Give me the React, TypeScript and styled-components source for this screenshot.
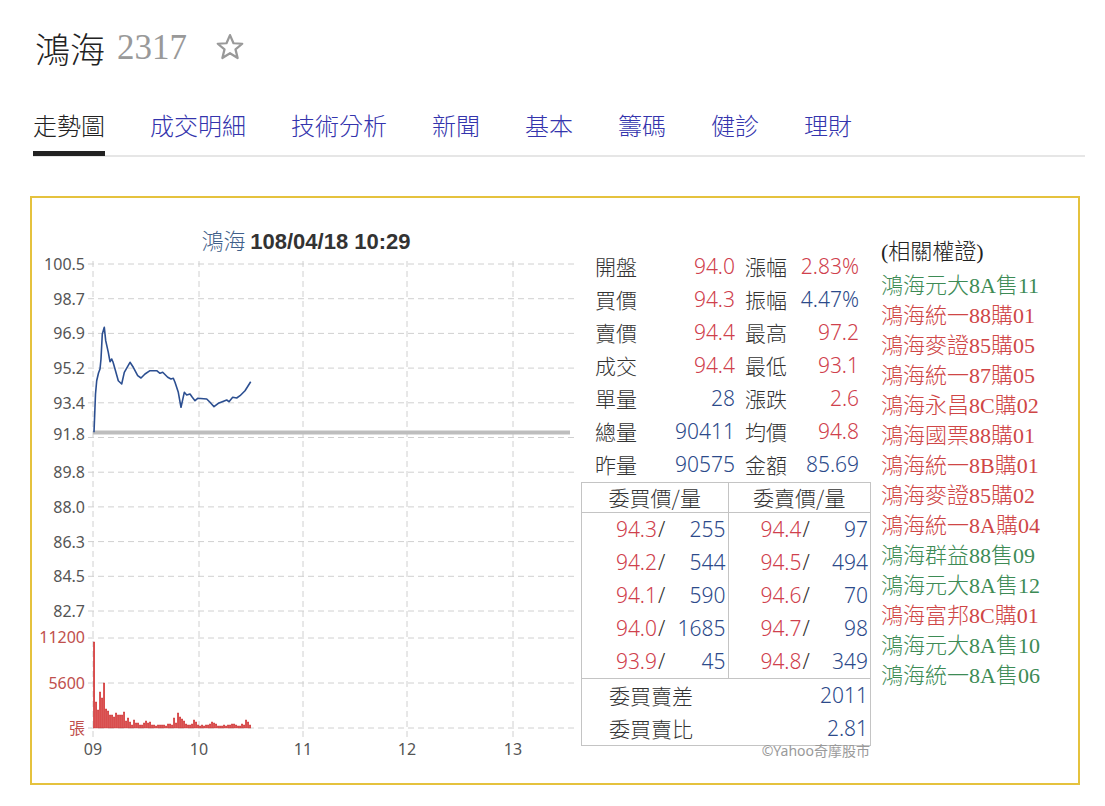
import React from "react";
import styled, { createGlobalStyle } from "styled-components";

const Global = createGlobalStyle`
  html, body { margin: 0; padding: 0; background: #fff; }
  body { font-family: "Noto Sans", "Noto Sans CJK TC", sans-serif; color: #333; }
`;

const RED = "#cf404c";
const BLUE = "#2c4a8a";
const WRED = "#cf4646";
const WGREEN = "#3d8b55";

const Page = styled.div`
  width: 1105px;
`;

const Header = styled.div`
  display: flex;
  align-items: center;
  padding: 28px 0 0 35px;
  height: 40px;
`;

const StockName = styled.span`
  font-family: "Noto Sans CJK TC", sans-serif;
  font-size: 35px;
  font-weight: 300;
  line-height: 40px;
  color: #222;
`;

const StockCode = styled.span`
  font-family: "Liberation Serif", serif;
  font-size: 35px;
  line-height: 40px;
  color: #999;
  margin-left: 12px;
`;

const StarButton = styled.span`
  display: inline-flex;
  margin-left: 28px;
  margin-top: -2px;
`;

const Tabs = styled.nav`
  display: flex;
  align-items: flex-end;
  gap: 45px;
  margin: 42px 0 0 33px;
  width: 1052px;
  border-bottom: 2px solid #e6e6e6;
`;

const Tab = styled.a<{ $active?: boolean }>`
  font-family: "Noto Sans CJK TC", sans-serif;
  font-size: 24px;
  font-weight: 300;
  line-height: 30px;
  color: ${(p) => (p.$active ? "#222" : "#3434ad")};
  padding-bottom: 11px;
  border-bottom: 5px solid ${(p) => (p.$active ? "#222" : "transparent")};
  margin-bottom: -1px;
  text-decoration: none;
  white-space: nowrap;
`;

const Panel = styled.section`
  box-sizing: border-box;
  margin: 39px 0 0 30px;
  width: 1050px;
  height: 589px;
  border: 2px solid #e5c23e;
  display: flex;
`;

const ChartSvg = styled.svg`
  display: block;
  flex: none;
  width: 549px;
  height: 585px;
`;

const QuoteColumn = styled.div`
  flex: none;
  width: 290px;
  padding-top: 51px;
  display: flex;
  flex-direction: column;
`;

const StatsGrid = styled.div`
  display: grid;
  grid-template-columns: 50px 90px 50px 74px;
  padding-left: 14px;
  grid-auto-rows: 33px;
  align-items: center;
  font-size: 21px;
  & > :nth-child(4n + 3) {
    padding-left: 10px;
  }
`;

const StatLabel = styled.span`
  font-family: "Noto Sans CJK TC", sans-serif;
  font-weight: 300;
  color: #333;
  white-space: nowrap;
`;

const StatValue = styled.span<{ $c: string }>`
  text-align: right;
  color: ${(p) => p.$c};
  font-family: "Noto Sans", sans-serif;
  font-weight: 300;
  white-space: nowrap;
`;

const Book = styled.div`
  margin-top: 2px;
  border: 1px solid #c4c4c4;
  font-size: 21px;
`;

const BookTop = styled.div`
  display: flex;
  border-bottom: 1px solid #c4c4c4;
`;

const BookSide = styled.div<{ $left?: boolean; $w: number }>`
  width: ${(p) => p.$w}px;
  border-right: ${(p) => (p.$left ? "1px solid #c4c4c4" : "none")};
`;

const BookHead = styled.div`
  height: 29px;
  line-height: 29px;
  text-align: center;
  border-bottom: 1px solid #c4c4c4;
  font-family: "Noto Sans CJK TC", sans-serif;
  font-weight: 300;
  color: #333;
`;

const BookRow = styled.div<{ $cols: string }>`
  display: grid;
  grid-template-columns: ${(p) => p.$cols};
  height: 33px;
  line-height: 33px;
  padding-right: 2px;
  font-weight: 300;
`;

const BookPrice = styled.span`
  text-align: right;
  color: ${RED};
`;

const Slash = styled.span`
  color: #333;
  padding-left: 1px;
`;

const BookQty = styled.span`
  text-align: right;
  color: ${BLUE};
`;

const SummaryRow = styled.div`
  display: flex;
  justify-content: space-between;
  height: 33px;
  line-height: 33px;
  padding: 0 2px 0 27px;
`;

const SummaryLabel = styled.span`
  font-family: "Noto Sans CJK TC", sans-serif;
  font-weight: 300;
  color: #333;
`;

const SummaryValue = styled.span`
  color: ${BLUE};
  font-weight: 300;
`;

const Copyright = styled.div`
  text-align: right;
  font-size: 14px;
  line-height: 14px;
  color: #9a9a9a;
  margin-top: -2px;
  padding-right: 1px;
`;

const Warrants = styled.ul`
  list-style: none;
  margin: 0 0 0 10px;
  padding: 39px 0 0 0;
  font-family: "Liberation Serif", "Noto Sans CJK TC", serif;
  font-size: 22px;
  font-weight: 300;
  line-height: 30px;
`;

const WarrantTitle = styled.li`
  color: #222;
  margin-bottom: 4px;
`;

const WarrantItem = styled.li<{ $c: string }>`
  color: ${(p) => p.$c};
  white-space: nowrap;
`;

const Star = () => (
  <svg width="30" height="30" viewBox="0 0 24 24" fill="none" stroke="#999" strokeWidth="1.8" strokeLinejoin="round">
    <polygon points="12,2.5 14.8,9 21.8,9.4 16.4,13.9 18.1,20.8 12,17 5.9,20.8 7.6,13.9 2.2,9.4 9.2,9" />
  </svg>
);

const priceLabels = ["100.5", "98.7", "96.9", "95.2", "93.4", "91.8", "89.8", "88.0", "86.3", "84.5", "82.7"];
const pricePts: [number, number][] = [
  [94, 433.3], [95.5, 395], [96.7, 381.7], [98.5, 374], [100, 370], [101, 360], [102.3, 335], [104.3, 328.3],
  [105.7, 341.7], [108.3, 353.3], [110, 362.7], [111.7, 360], [113, 363], [115, 370], [118.3, 381.7],
  [121.7, 385], [124.3, 373.3], [130, 363.3], [133.3, 368.3], [137.7, 376.7], [141, 379], [145, 375],
  [150, 371.7], [156.7, 371.7], [160, 374.3], [162.7, 373.3], [167.7, 378.3], [171, 380], [173.3, 379.3],
  [175, 383.3], [178.3, 393.3], [181, 408.3], [184.3, 393.3], [186.7, 396], [190, 395], [192.3, 398.3],
  [195, 401.7], [197.7, 399.3], [206.7, 400], [210, 403.3], [214, 407.7], [218.3, 404.3], [222.3, 402.7],
  [226.7, 401], [229, 402.7], [232.7, 398.3], [236.7, 399], [240, 396.7], [245, 391.7], [250.7, 382.7],
];
const volH = [
  86, 26, 18, 36, 30, 45, 19, 17, 13, 13, 11, 15, 13, 13, 13, 16, 7, 10, 6, 3, 8, 5, 5, 3, 3, 5, 7, 5, 6, 3,
  3, 2, 3, 3, 3, 3, 2, 4, 4, 3, 10, 5, 15, 11, 9, 7, 4, 3, 3, 4, 8, 6, 3, 2, 3, 2, 3, 3, 4, 6, 5, 4, 2, 2, 2,
  3, 2, 3, 3, 4, 4, 3, 2, 2, 4, 3, 8, 6, 3,
];

const gridX = [93, 199, 303, 407, 513];
const xLabels = ["09", "10", "11", "12", "13"];
const VOL_BASE = 729;

const Chart = () => {
  const priceY = (i: number) => 265 + i * 34.7;
  return (
    <ChartSvg viewBox="32 199 549 585">
      <text x="306" y="250" textAnchor="middle" fontSize="22">
        <tspan fill="#3f5f8a" fontFamily="Noto Sans CJK TC, sans-serif" fontWeight="300">鴻海 </tspan>
        <tspan fill="#333" fontFamily="Liberation Sans, sans-serif" fontWeight="bold">108/04/18 10:29</tspan>
      </text>
      <g stroke="#d0d0d0" strokeWidth="1" strokeDasharray="6 4">
        {priceLabels.map((_, i) => (
          <line key={"h" + i} x1="88" x2="574" y1={priceY(i)} y2={priceY(i)} />
        ))}
        {[639, 684, VOL_BASE].map((y) => (
          <line key={"v" + y} x1="88" x2="574" y1={y} y2={y} />
        ))}
        {gridX.map((x) => (
          <line key={"x" + x} x1={x} x2={x} y1="262" y2="741" />
        ))}
      </g>
      <g fontFamily="Noto Sans, sans-serif" fontSize="16" textAnchor="end" dominantBaseline="central">
        {priceLabels.map((l, i) => (
          <text key={l} x="85" y={i === 5 ? 435 : priceY(i)} fill="#555">
            {l}
          </text>
        ))}
        <text x="85" y="638" fill="#c0504d">11200</text>
        <text x="85" y="684" fill="#c0504d">5600</text>
        <text x="85" y="728" fill="#c0504d" fontFamily="Noto Sans CJK TC, sans-serif">張</text>
      </g>
      <g fontFamily="Noto Sans, sans-serif" fontSize="16" textAnchor="middle" dominantBaseline="central" fill="#555">
        {gridX.map((x, i) => (
          <text key={xLabels[i]} x={x} y="750">
            {xLabels[i]}
          </text>
        ))}
      </g>
      <line x1="93" x2="570" y1="433.5" y2="433.5" stroke="#bdbdbd" strokeWidth="4" />
      <polyline
        points={pricePts.map((p) => p.join(",")).join(" ")}
        fill="none"
        stroke="#2c4f91"
        strokeWidth="1.6"
        strokeLinejoin="round"
      />
      <g fill="#e33b3b" stroke="#c23030" strokeWidth="0.4">
        {volH.map((h, i) => (
          <rect key={i} x={93.3 + i * 2} y={VOL_BASE - h} width="1.5" height={h} />
        ))}
      </g>
    </ChartSvg>
  );
};

const stats: [string, string, string, string, string, string][] = [
  ["開盤", "94.0", RED, "漲幅", "2.83%", RED],
  ["買價", "94.3", RED, "振幅", "4.47%", BLUE],
  ["賣價", "94.4", RED, "最高", "97.2", RED],
  ["成交", "94.4", RED, "最低", "93.1", RED],
  ["單量", "28", BLUE, "漲跌", "2.6", RED],
  ["總量", "90411", BLUE, "均價", "94.8", RED],
  ["昨量", "90575", BLUE, "金額", "85.69", BLUE],
];

const bids = [
  ["94.3", "255"],
  ["94.2", "544"],
  ["94.1", "590"],
  ["94.0", "1685"],
  ["93.9", "45"],
];
const asks = [
  ["94.4", "97"],
  ["94.5", "494"],
  ["94.6", "70"],
  ["94.7", "98"],
  ["94.8", "349"],
];

const warrants: [string, boolean][] = [
  ["鴻海元大8A售11", true],
  ["鴻海統一88購01", false],
  ["鴻海麥證85購05", false],
  ["鴻海統一87購05", false],
  ["鴻海永昌8C購02", false],
  ["鴻海國票88購01", false],
  ["鴻海統一8B購01", false],
  ["鴻海麥證85購02", false],
  ["鴻海統一8A購04", false],
  ["鴻海群益88售09", true],
  ["鴻海元大8A售12", true],
  ["鴻海富邦8C購01", false],
  ["鴻海元大8A售10", true],
  ["鴻海統一8A售06", true],
];

const tabs = ["走勢圖", "成交明細", "技術分析", "新聞", "基本", "籌碼", "健診", "理財"];

export default function App() {
  return (
    <Page>
      <Global />
      <Header>
        <StockName>鴻海</StockName>
        <StockCode>2317</StockCode>
        <StarButton>
          <Star />
        </StarButton>
      </Header>
      <Tabs>
        {tabs.map((t, i) => (
          <Tab key={t} $active={i === 0}>
            {t}
          </Tab>
        ))}
      </Tabs>
      <Panel>
        <Chart />
        <QuoteColumn>
          <StatsGrid>
            {stats.map((r) => (
              <React.Fragment key={r[0]}>
                <StatLabel>{r[0]}</StatLabel>
                <StatValue $c={r[2]}>{r[1]}</StatValue>
                <StatLabel>{r[3]}</StatLabel>
                <StatValue $c={r[5]}>{r[4]}</StatValue>
              </React.Fragment>
            ))}
          </StatsGrid>
          <Book>
            <BookTop>
              <BookSide $left $w={146}>
                <BookHead>委買價/量</BookHead>
                {bids.map((b) => (
                  <BookRow key={b[0]} $cols="75px 12px 1fr">
                    <BookPrice>{b[0]}</BookPrice>
                    <Slash>/</Slash>
                    <BookQty>{b[1]}</BookQty>
                  </BookRow>
                ))}
              </BookSide>
              <BookSide $w={142}>
                <BookHead>委賣價/量</BookHead>
                {asks.map((a) => (
                  <BookRow key={a[0]} $cols="73px 12px 1fr">
                    <BookPrice>{a[0]}</BookPrice>
                    <Slash>/</Slash>
                    <BookQty>{a[1]}</BookQty>
                  </BookRow>
                ))}
              </BookSide>
            </BookTop>
            <SummaryRow>
              <SummaryLabel>委買賣差</SummaryLabel>
              <SummaryValue>2011</SummaryValue>
            </SummaryRow>
            <SummaryRow>
              <SummaryLabel>委買賣比</SummaryLabel>
              <SummaryValue>2.81</SummaryValue>
            </SummaryRow>
          </Book>
          <Copyright>©Yahoo奇摩股市</Copyright>
        </QuoteColumn>
        <Warrants>
          <WarrantTitle>(相關權證)</WarrantTitle>
          {warrants.map(([w, g]) => (
            <WarrantItem key={w} $c={g ? WGREEN : WRED}>
              {w}
            </WarrantItem>
          ))}
        </Warrants>
      </Panel>
    </Page>
  );
}
